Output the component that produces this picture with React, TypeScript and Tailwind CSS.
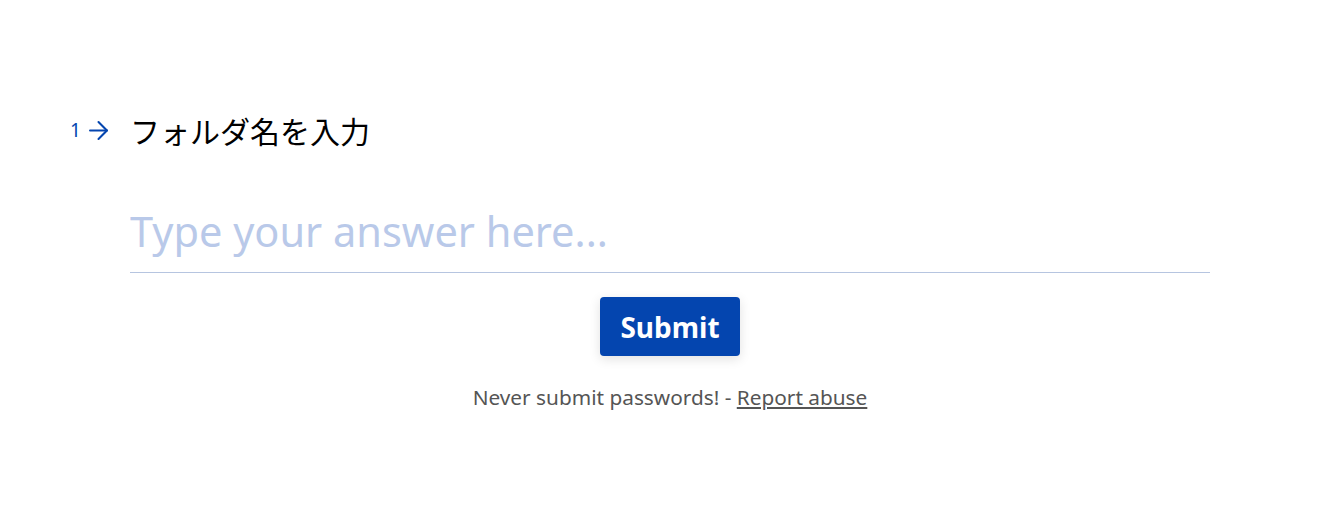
import { ArrowRight } from 'lucide-react'

export default function App() {
  return (
    <div className="min-h-[509px] w-full bg-white pt-[106px] font-['Noto_Sans','Noto_Sans_CJK_JP',sans-serif]">
      <div className="ml-[70px] w-[1140px]">
        <div className="flex items-center">
          <div className="flex w-[60px] items-center text-[#0445af]">
            <span className="text-[19px] leading-none">1</span>
            <ArrowRight className="ml-[3px] h-[29px] w-[29px]" strokeWidth={1.7} />
          </div>
          <h1 className="text-[30px] leading-[48px] text-black font-['Noto_Sans_CJK_JP',sans-serif]">
            フォルダ名を入力
          </h1>
        </div>
        <div className="ml-[60px] mt-[49px] w-[1080px]">
          <input
            type="text"
            placeholder="Type your answer here..."
            className="w-full border-b border-[#b6c5e0] bg-transparent pb-[13px] text-[41.5px] leading-[56px] text-[#0445af] outline-none placeholder:text-[#b9c9e9]"
          />
          <div className="mt-[24px] flex flex-col items-center">
            <button className="h-[59px] w-[140px] rounded-[4px] bg-[#0445af] text-[28px] font-bold text-white shadow-[0_3px_12px_rgba(0,0,0,0.12)]">
              Submit
            </button>
            <p className="mt-[26px] text-[20.8px] text-[#555555]">
              Never submit passwords! - <a href="#" className="underline">Report abuse</a>
            </p>
          </div>
        </div>
      </div>
    </div>
  )
}
